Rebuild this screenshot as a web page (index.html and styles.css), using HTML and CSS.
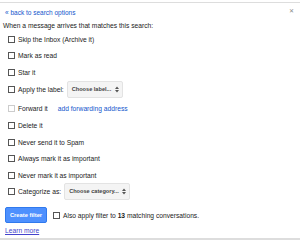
FILE: index.html
```html
<!DOCTYPE html>
<html>
<head>
<meta charset="utf-8">
<link rel="stylesheet" href="styles.css">
</head>
<body>
<div class="dialog">
  <div class="topbar"><span class="close">&#x2715;</span></div>
  <a class="back">« back to search options</a>
  <div class="intro">When a message arrives that matches this search:</div>
  <div class="opts">
    <label class="row"><span class="cb"></span>Skip the Inbox (Archive it)</label>
    <label class="row"><span class="cb"></span>Mark as read</label>
    <label class="row"><span class="cb"></span>Star it</label>
    <label class="row sel-row"><span class="cb"></span>Apply the label:<span class="select sel-label"><span class="sel-text">Choose label...</span><svg class="arr" width="4" height="7" viewBox="0 0 4 7"><path d="M0 3 L2 0.5 L4 3 Z M0 4 L2 6.5 L4 4 Z" fill="#555"/></svg></span></label>
    <label class="row fwd-row"><span class="cb dis"></span>Forward it<a class="fwd">add forwarding address</a></label>
    <label class="row"><span class="cb"></span>Delete it</label>
    <label class="row"><span class="cb"></span>Never send it to Spam</label>
    <label class="row"><span class="cb"></span>Always mark it as important</label>
    <label class="row"><span class="cb"></span>Never mark it as important</label>
    <label class="row"><span class="cb"></span>Categorize as:<span class="select sel-cat"><span class="sel-text">Choose category...</span><svg class="arr" width="4" height="7" viewBox="0 0 4 7"><path d="M0 3 L2 0.5 L4 3 Z M0 4 L2 6.5 L4 4 Z" fill="#555"/></svg></span></label>
  </div>
  <div class="actions">
    <button class="create">Create filter</button>
    <div class="also"><span class="cb"></span><span>Also apply filter to <b>13</b> matching conversations.</span></div>
  </div>
  <a class="learn">Learn more</a>
  <div class="bottombar"></div>
</div>
</body>
</html>
```
FILE: styles.css
```css
html, body { margin: 0; padding: 0; background: #fff; }
body { font-family: "Liberation Sans", Arial, sans-serif; font-size: 6.7px; color: #222; }
.dialog { width: 300px; height: 240px; position: relative; overflow: hidden; display: flex; flex-direction: column; }
.topbar { height: 2px; border-bottom: 1px solid #ddd; position: relative; }
.close { position: absolute; right: 6px; top: 7px; font-size: 6px; color: #888; }
.back { color: #15c; margin: 5px 0 0 5px; font-size: 6.5px; line-height: 9px; }
.intro { margin: 4px 0 0 3px; line-height: 9px; }
.opts { display: flex; flex-direction: column; margin-top: 1px; }
.row { display: flex; align-items: center; height: 16.5px; padding-left: 8px; white-space: nowrap; }
.sel-row { height: 18px; }
.fwd-row { height: 19px; }
.cb { width: 5px; height: 5px; border: 1px solid #555; background: #fff; margin-right: 3px; flex: none; }
.cb.dis { border-color: #ccc; }
.fwd { color: #15c; margin-left: 10px; }
.select { display: inline-flex; align-items: center; justify-content: space-between; height: 17px; box-sizing: border-box; padding: 0 3px 0 4px; margin-left: 3px; border: 1px solid #e3e3e3; border-radius: 2px; background: #f4f4f4; font-size: 5.6px; font-weight: bold; color: #444; white-space: nowrap; }
.sel-text { line-height: 7px; }
.sel-label { width: 56px; }
.sel-cat { width: 66px; }
.arr { flex: none; margin-left: 2px; }
.actions { display: flex; align-items: center; margin-top: 7px; padding-left: 5px; }
.create { width: 42px; height: 16px; padding: 0; border: 1px solid #3079ed; border-radius: 2px; background: #4d90fe; color: #fff; font-family: "Liberation Sans", Arial, sans-serif; font-size: 5.8px; font-weight: bold; }
.also { display: flex; align-items: center; margin-left: 6px; white-space: nowrap; }
.learn { color: #44c; text-decoration: underline; margin: 3px 0 0 5px; line-height: 9px; }
.bottombar { position: absolute; left: 0; right: 0; bottom: 0; height: 2px; background: #ddd; }
```
